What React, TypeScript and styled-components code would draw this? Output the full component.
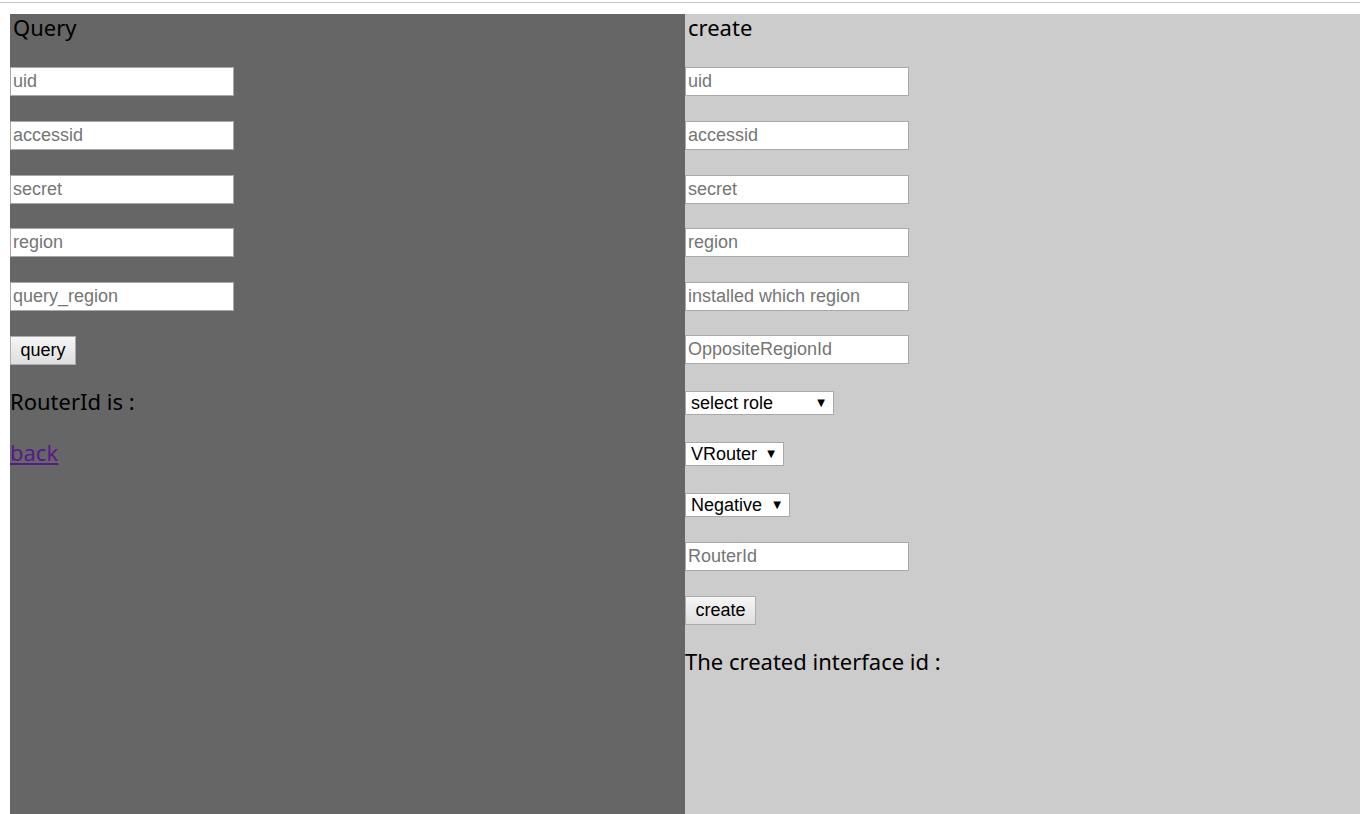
import React from "react";
import styled, { createGlobalStyle } from "styled-components";

const Global = createGlobalStyle`
  html, body { margin: 0; padding: 0; background: #fff; }
  body { font-family: "Noto Sans", "Liberation Sans", sans-serif; overflow: hidden; }
`;

const TopRule = styled.div`
  height: 1px;
  margin-top: 2px;
  width: 1360px;
  background: #c8c8c8;
`;

const Page = styled.div`
  display: flex;
  padding: 11px 0 0 10px;
`;

const Panel = styled.section<{ $bg: string }>`
  width: 675px;
  min-height: 820px;
  background: ${(p) => p.$bg};
  display: flex;
  flex-direction: column;
  align-items: flex-start;
`;

const Title = styled.h2<{ $indent: number }>`
  margin: 0;
  padding-left: ${(p) => p.$indent}px;
  font-size: 22px;
  font-weight: 400;
  line-height: 26px;
  color: #000;
`;

const Row = styled.div<{ $top: number }>`
  margin-top: ${(p) => p.$top}px;
  display: flex;
`;

const Input = styled.input`
  box-sizing: border-box;
  width: 224px;
  height: 29px;
  border: 1px solid #a9a9a9;
  padding: 0 2px;
  font-family: "Liberation Sans", Arial, sans-serif;
  font-size: 18px;
  background: #fff;
  outline: none;
  &::placeholder { color: #757575; }
`;

const Button = styled.button<{ $w: number }>`
  box-sizing: border-box;
  width: ${(p) => p.$w}px;
  height: 29px;
  border: 1px solid #adadad;
  background: linear-gradient(#f6f6f6, #dedede);
  font-family: "Liberation Sans", Arial, sans-serif;
  font-size: 18px;
  color: #000;
  padding: 0;
`;

const SelectWrap = styled.div`
  position: relative;
  display: inline-flex;
`;

const Select = styled.select<{ $w: number }>`
  appearance: none;
  -webkit-appearance: none;
  box-sizing: border-box;
  width: ${(p) => p.$w}px;
  height: 24px;
  border: 1px solid #a9a9a9;
  border-radius: 0;
  background: #fff;
  padding: 0 0 0 5px;
  font-family: "Liberation Sans", Arial, sans-serif;
  font-size: 18px;
  color: #000;
  outline: none;
`;

const Arrow = styled.span`
  position: absolute;
  right: 9px;
  top: 6px;
  font-family: "DejaVu Sans", sans-serif;
  font-size: 10px;
  line-height: 12px;
  pointer-events: none;
  color: #000;
`;

const Label = styled.div<{ $top: number }>`
  margin-top: ${(p) => p.$top}px;
  font-size: 22px;
  line-height: 30px;
  color: #000;
`;

const BackLink = styled.a`
  margin-top: 21px;
  font-size: 22px;
  line-height: 30px;
  color: #551a8b;
  text-decoration: underline;
`;

function Drop({ w, label, options }: { w: number; label: string; options: string[] }) {
  return (
    <SelectWrap>
      <Select $w={w} defaultValue={label}>
        {options.map((o) => (
          <option key={o} value={o}>{o}</option>
        ))}
      </Select>
      <Arrow>▼</Arrow>
    </SelectWrap>
  );
}

export default function App() {
  return (
    <>
      <Global />
      <TopRule />
      <Page>
        <Panel $bg="#666666">
          <Title $indent={3}>Query</Title>
          <Row $top={27}><Input placeholder="uid" /></Row>
          <Row $top={25}><Input placeholder="accessid" /></Row>
          <Row $top={25}><Input placeholder="secret" /></Row>
          <Row $top={24}><Input placeholder="region" /></Row>
          <Row $top={25}><Input placeholder="query_region" /></Row>
          <Row $top={25}><Button $w={66}>query</Button></Row>
          <Label $top={21}>RouterId is :</Label>
          <BackLink href="#">back</BackLink>
        </Panel>
        <Panel $bg="#cccccc">
          <Title $indent={3}>create</Title>
          <Row $top={27}><Input placeholder="uid" /></Row>
          <Row $top={25}><Input placeholder="accessid" /></Row>
          <Row $top={25}><Input placeholder="secret" /></Row>
          <Row $top={24}><Input placeholder="region" /></Row>
          <Row $top={25}><Input placeholder="installed which region" /></Row>
          <Row $top={24}><Input placeholder="OppositeRegionId" /></Row>
          <Row $top={27}><Drop w={149} label="select role" options={["select role", "InitiatingSide", "AcceptingSide"]} /></Row>
          <Row $top={27}><Drop w={99} label="VRouter" options={["VRouter", "VBR"]} /></Row>
          <Row $top={27}><Drop w={105} label="Negative" options={["Negative", "Positive"]} /></Row>
          <Row $top={25}><Input placeholder="RouterId" /></Row>
          <Row $top={25}><Button $w={71}>create</Button></Row>
          <Label $top={21}>The created interface id :</Label>
        </Panel>
      </Page>
    </>
  );
}
